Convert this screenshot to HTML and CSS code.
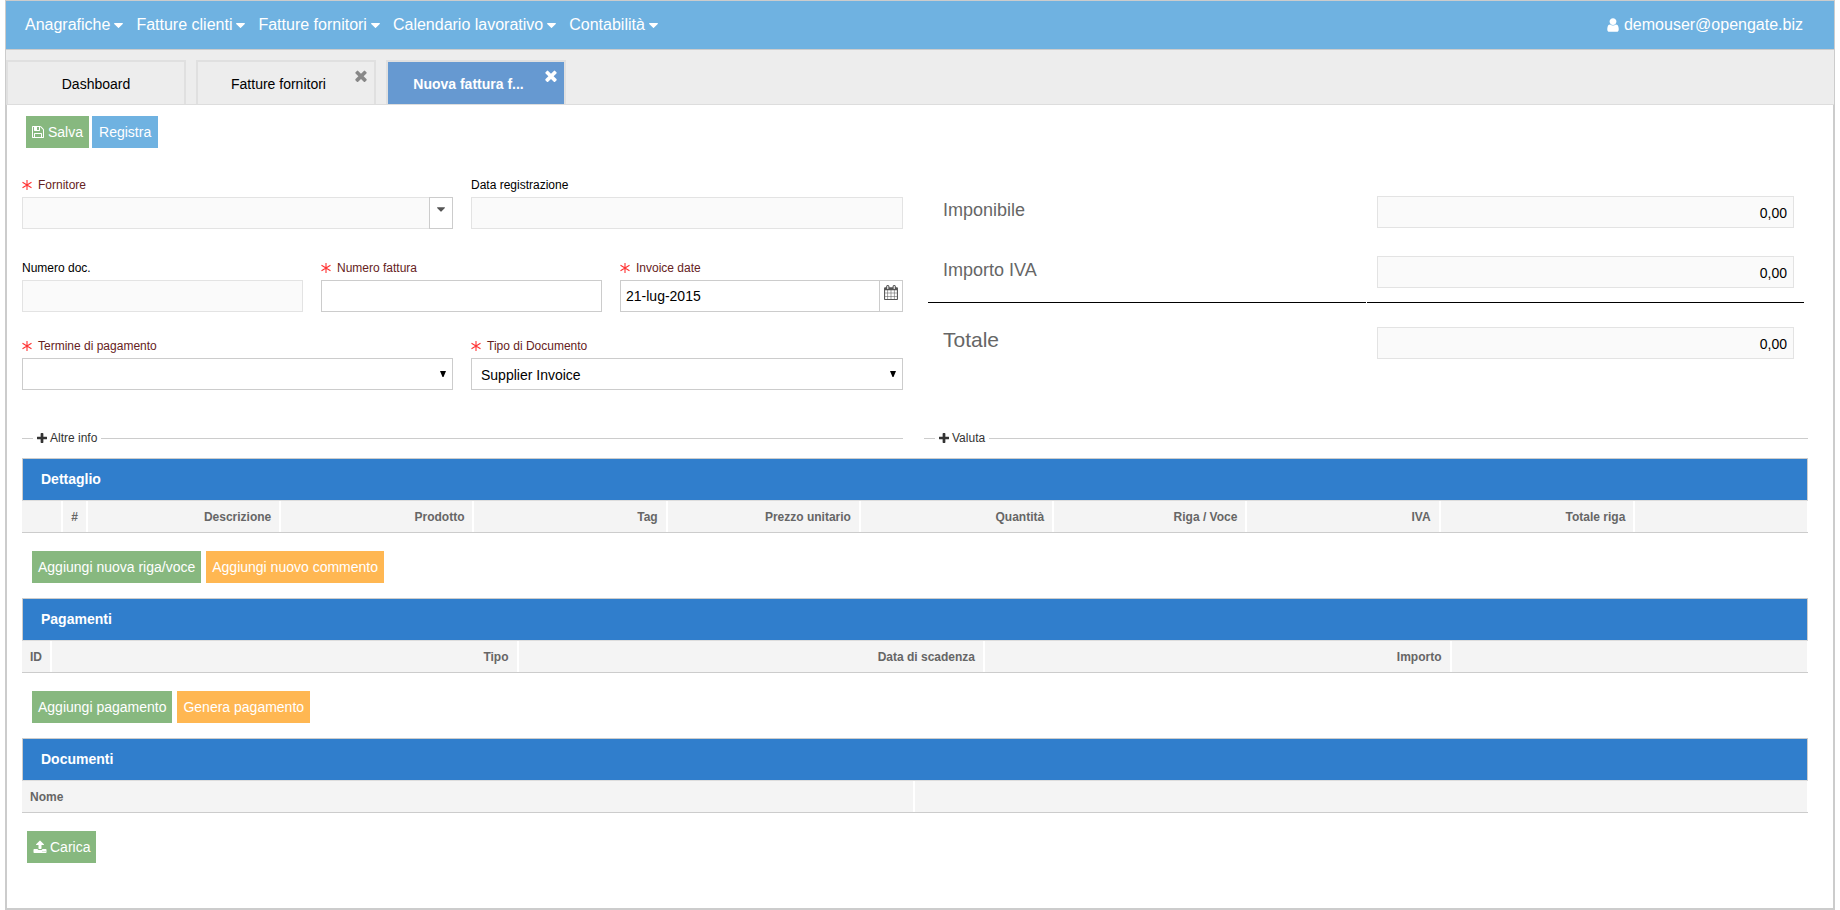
FILE: index.html
```html
<!DOCTYPE html>
<html lang="it">
<head>
<meta charset="utf-8">
<title>Nuova fattura fornitore</title>
<link rel="stylesheet" href="styles.css">
</head>
<body>
<svg class="sprite" aria-hidden="true">
  <symbol id="i-caret" viewBox="384 640 1024 576"><path d="M1408 704q0 26-19 45l-448 448q-19 19-45 19t-45-19l-448-448q-19-19-19-45t19-45 45-19h896q26 0 45 19t19 45z"/></symbol>
  <symbol id="i-user" viewBox="256 0 1280 1792"><path d="M1536 1399q0 109-62.5 187t-150.5 78h-854q-88 0-150.5-78t-62.5-187q0-85 8.5-160.5t31.5-152 58.5-131 94-89 134.5-34.5q131 128 313 128t313-128q76 0 134.5 34.5t94 89 58.5 131 31.5 152 8.5 160.5zm-256-887q0 159-112.5 271.5t-271.5 112.5-271.5-112.5-112.5-271.5 112.5-271.5 271.5-112.5 271.5 112.5 112.5 271.5z"/></symbol>
  <symbol id="i-times" viewBox="302 302 1188 1252"><path d="M1490 1322q0 40-28 68l-136 136q-28 28-68 28t-68-28l-294-294-294 294q-28 28-68 28t-68-28l-136-136q-28-28-28-68t28-68l294-294-294-294q-28-28-28-68t28-68l136-136q28-28 68-28t68 28l294 294 294-294q28-28 68-28t68 28l136 136q28 28 28 68t-28 68l-294 294 294 294q28 28 28 68z"/></symbol>
  <symbol id="i-plus" viewBox="192 128 1408 1408"><path d="M1600 736v192q0 40-28 68t-68 28h-416v416q0 40-28 68t-68 28h-192q-40 0-68-28t-28-68v-416h-416q-40 0-68-28t-28-68v-192q0-40 28-68t68-28h416v-416q0-40 28-68t68-28h192q40 0 68 28t28 68v416h416q40 0 68 28t28 68z"/></symbol>
  <symbol id="i-save" viewBox="128 0 1536 1792"><path d="M512 1536h768v-384h-768v384zm896 0h128v-896q0-14-10-38.5t-20-34.5l-281-281q-10-10-34-20t-39-10v416q0 40-28 68t-68 28h-576q-40 0-68-28t-28-68v-416h-128v1280h128v-416q0-40 28-68t68-28h832q40 0 68 28t28 68v416zm-384-928v-320q0-13-9.5-22.5t-22.5-9.5h-192q-13 0-22.5 9.5t-9.5 22.5v320q0 13 9.5 22.5t22.5 9.5h192q13 0 22.5-9.5t9.5-22.5zm640 32v928q0 40-28 68t-68 28h-1344q-40 0-68-28t-28-68v-1344q0-40 28-68t68-28h928q40 0 88 20t76 48l280 280q28 28 48 76t20 88z"/></symbol>
  <symbol id="i-upload" viewBox="0 0 1792 1792"><path d="M1344 1472q0-26-19-45t-45-19-45 19-19 45 19 45 45 19 45-19 19-45zm256 0q0-26-19-45t-45-19-45 19-19 45 19 45 45 19 45-19 19-45zm128-224v320q0 40-28 68t-68 28h-1472q-40 0-68-28t-28-68v-320q0-40 28-68t68-28h427q21 56 70.500 92t110.500 36h256q61 0 110.500-36t70.500-92h427q40 0 68 28t28 68zm-325-648q-17 40-59 40h-256v448q0 26-19 45t-45 19h-256q-26 0-45-19t-19-45v-448h-256q-42 0-59-40-17-39 14-69l448-448q18-19 45-19t45 19l448 448q31 30 14 69z"/></symbol>
  <symbol id="i-calendar" viewBox="64 0 1664 1792"><path d="M192 1664h288v-288h-288v288zm352 0h320v-288h-320v288zm-352-352h288v-320h-288v320zm352 0h320v-320h-320v320zm-352-384h288v-288h-288v288zm736 736h320v-288h-320v288zm-384-736h320v-288h-320v288zm768 736h288v-288h-288v288zm-384-352h320v-320h-320v320zm-352-864v-288q0-13-9.5-22.5t-22.5-9.5h-64q-13 0-22.500 9.500t-9.500 22.500v288q0 13 9.500 22.500t22.500 9.500h64q13 0 22.500-9.500t9.500-22.500zm736 864h288v-320h-288v320zm-384-384h320v-288h-320v288zm384 0h288v-288h-288v288zm32-480v-288q0-13-9.500-22.500t-22.500-9.500h-64q-13 0-22.500 9.500t-9.500 22.500v288q0 13 9.500 22.500t22.500 9.500h64q13 0 22.500-9.500t9.500-22.500zm384-64v1280q0 52-38 90t-90 38h-1408q-52 0-90-38t-38-90v-1280q0-52 38-90t90-38h128v-96q0-66 47-113t113-47h64q66 0 113 47t47 113v96h384v-96q0-66 47-113t113-47h64q66 0 113 47t47 113v96h128q52 0 90 38t38 90z"/></symbol>
  <symbol id="i-required" viewBox="0 0 10 10"><path d="M5 0v10M.5 2.200l9 5.600M9.500 2.200l-9 5.600" fill="none" stroke="currentColor" stroke-width="1.100"/></symbol>
  <symbol id="i-arrow" viewBox="0 0 6 6"><path d="M0 0h6L3.500 6h-1z"/></symbol>
</svg>

<div class="frame">
  <header class="topbar">
    <nav class="menu">
      <button type="button" class="menu-item">Anagrafiche<svg class="caret"><use href="#i-caret"/></svg></button>
      <button type="button" class="menu-item">Fatture clienti<svg class="caret"><use href="#i-caret"/></svg></button>
      <button type="button" class="menu-item">Fatture fornitori<svg class="caret"><use href="#i-caret"/></svg></button>
      <button type="button" class="menu-item">Calendario lavorativo<svg class="caret"><use href="#i-caret"/></svg></button>
      <button type="button" class="menu-item">Contabilità<svg class="caret"><use href="#i-caret"/></svg></button>
    </nav>
    <a class="user" href="#"><svg class="user-icon"><use href="#i-user"/></svg>demouser@opengate.biz</a>
  </header>

  <div class="tabs">
    <div class="tab"><button type="button" class="tab-label">Dashboard</button></div>
    <div class="tab closable"><button type="button" class="tab-label">Fatture fornitori</button><button type="button" class="tab-close" aria-label="Chiudi"><svg><use href="#i-times"/></svg></button></div>
    <div class="tab closable active"><button type="button" class="tab-label">Nuova fattura f...</button><button type="button" class="tab-close" aria-label="Chiudi"><svg><use href="#i-times"/></svg></button></div>
  </div>

  <main class="content">
    <div class="toolbar">
      <button type="button" class="btn green save"><svg class="save-icon"><use href="#i-save"/></svg>Salva</button>
      <button type="button" class="btn blue">Registra</button>
    </div>

    <form class="columns">
      <div class="fields">
        <div class="row two">
          <div class="field">
            <label class="required" for="fornitore"><svg><use href="#i-required"/></svg>Fornitore</label>
            <div class="combo"><input id="fornitore" type="text" readonly><button type="button" class="addon" aria-label="Apri elenco"><svg class="combo-caret"><use href="#i-caret"/></svg></button></div>
          </div>
          <div class="field">
            <label for="data-reg">Data registrazione</label>
            <input id="data-reg" type="text" readonly>
          </div>
        </div>
        <div class="row three">
          <div class="field">
            <label for="num-doc">Numero doc.</label>
            <input id="num-doc" type="text" readonly>
          </div>
          <div class="field">
            <label class="required" for="num-fatt"><svg><use href="#i-required"/></svg>Numero fattura</label>
            <input id="num-fatt" type="text">
          </div>
          <div class="field">
            <label class="required" for="inv-date"><svg><use href="#i-required"/></svg>Invoice date</label>
            <div class="combo"><input id="inv-date" type="text" value="21-lug-2015"><button type="button" class="addon" aria-label="Calendario"><svg class="cal-icon"><use href="#i-calendar"/></svg></button></div>
          </div>
        </div>
        <div class="row two">
          <div class="field">
            <label class="required" for="termine"><svg><use href="#i-required"/></svg>Termine di pagamento</label>
            <div class="select"><select id="termine"><option></option></select><svg><use href="#i-arrow"/></svg></div>
          </div>
          <div class="field">
            <label class="required" for="tipo"><svg><use href="#i-required"/></svg>Tipo di Documento</label>
            <div class="select"><select id="tipo"><option>Supplier Invoice</option></select><svg><use href="#i-arrow"/></svg></div>
          </div>
        </div>
      </div>
      <div class="totals">
        <div class="total"><label for="imponibile">Imponibile</label><div class="amount"><input id="imponibile" type="text" value="0,00" readonly></div></div>
        <div class="total ruled"><label for="iva">Importo IVA</label><div class="amount"><input id="iva" type="text" value="0,00" readonly></div></div>
        <div class="total grand"><label for="totale">Totale</label><div class="amount"><input id="totale" type="text" value="0,00" readonly></div></div>
      </div>
    </form>

    <div class="columns folds">
      <fieldset class="fold"><legend><button type="button"><svg><use href="#i-plus"/></svg>Altre info</button></legend></fieldset>
      <fieldset class="fold"><legend><button type="button"><svg><use href="#i-plus"/></svg>Valuta</button></legend></fieldset>
    </div>

    <section class="section">
      <h2>Dettaglio</h2>
      <table class="detail">
        <colgroup><col class="c-handle"><col class="c-num"><col span="7" class="c-data"><col class="c-total"><col></colgroup>
        <thead><tr><th></th><th>#</th><th>Descrizione</th><th>Prodotto</th><th>Tag</th><th>Prezzo unitario</th><th>Quantità</th><th>Riga / Voce</th><th>IVA</th><th>Totale riga</th><th></th></tr></thead>
      </table>
      <div class="actions">
        <button type="button" class="btn green">Aggiungi nuova riga/voce</button>
        <button type="button" class="btn orange">Aggiungi nuovo commento</button>
      </div>
    </section>

    <section class="section">
      <h2>Pagamenti</h2>
      <table>
        <colgroup><col class="c-id"><col span="3" class="c-pay"><col></colgroup>
        <thead><tr><th>ID</th><th>Tipo</th><th>Data di scadenza</th><th>Importo</th><th></th></tr></thead>
      </table>
      <div class="actions">
        <button type="button" class="btn green">Aggiungi pagamento</button>
        <button type="button" class="btn orange">Genera pagamento</button>
      </div>
    </section>

    <section class="section">
      <h2>Documenti</h2>
      <table>
        <colgroup><col class="c-half"><col></colgroup>
        <thead><tr><th class="left">Nome</th><th></th></tr></thead>
      </table>
      <div class="actions upload">
        <button type="button" class="btn green"><svg class="upload-icon"><use href="#i-upload"/></svg>Carica</button>
      </div>
    </section>
  </main>
</div>
</body>
</html>
```
FILE: styles.css
```css
* { box-sizing: border-box; }

body {
  margin: 0;
  padding: 0 5px;
  background: #fff;
  color: #000;
  font-family: "Liberation Sans", Arial, sans-serif;
  font-size: 14px;
}

button, input, select { font: inherit; color: inherit; margin: 0; border-radius: 0; }
button { border: 0; padding: 0; background: none; cursor: pointer; }
svg { fill: currentColor; flex: none; }
.sprite { position: absolute; width: 0; height: 0; }

.frame { border: 1px solid #ccc; border-bottom-width: 2px; }

/* Top bar */
.topbar {
  display: flex;
  justify-content: space-between;
  align-items: center;
  height: 49px;
  padding: 0 31px 0 19px;
  background: #6fb2e1;
  border-bottom: 1px solid #ccc;
  color: #fff;
  font-size: 16px;
}
.menu { display: flex; gap: 13px; }
.menu-item, .user { display: flex; align-items: center; gap: 4px; }
.user { color: #fff; text-decoration: none; gap: 5px; }
.caret { width: 9px; height: 5px; }
.user-icon { width: 12px; height: 16px; }

/* Tabs */
.tabs {
  display: flex;
  gap: 10px;
  height: 55px;
  padding-top: 10px;
  background: #ededed;
  border-bottom: 1px solid #ddd;
}
.tab { position: relative; width: 180px; border: 2px solid #e0e0e0; border-bottom: 0; }
.tab-label { width: 100%; height: 100%; padding-top: 2px; }
.closable .tab-label { padding-right: 15px; }
.tab-close { position: absolute; top: 8px; right: 7px; width: 12px; height: 12px; color: #888; }
.tab-close svg { display: block; width: 12px; height: 12px; }
.active { background: #6699d1; color: #fff; font-weight: bold; }
.active .tab-close { color: #fff; }

/* Content */
.content {
  padding: 11px 25px 45px 15px;
  border: solid #ccc;
  border-width: 0 1px;
}
.toolbar { display: flex; gap: 3px; padding-left: 4px; }
.btn { display: flex; align-items: center; height: 32px; padding: 0 6px; color: #fff; }
.green { background: #87b87f; }
.blue { background: #6fb2e1; padding: 0 7px; }
.orange { background: #ffb752; }
.save { gap: 4px; }
.save-icon { width: 12px; height: 14px; }
.upload-icon { width: 14px; height: 14px; margin-right: 3px; }

.columns { display: grid; grid-template-columns: 881fr 884fr; gap: 21px; }
.fields { padding-top: 29px; }
.row { display: grid; gap: 18px; margin-bottom: 31px; }
.row + .row { margin-bottom: 26px; }
.row + .row + .row { margin-bottom: 0; }
.two { grid-template-columns: 431fr 432fr; }
.three { grid-template-columns: 281fr 281fr 283fr; }
.field { min-width: 0; }
.field label { display: flex; align-items: center; gap: 6px; height: 16px; margin-bottom: 4px; font-size: 12px; }
.field label svg { width: 10px; height: 10px; color: #f33; }
.field .required { color: #622; }

input, select {
  display: block;
  width: 100%;
  min-width: 0;
  height: 32px;
  padding: 0 5px;
  border: 1px solid #ccc;
  background: #fff;
  outline: 0;
}
input[readonly] { background: #fafafa; border-color: #e3e3e3; }
.combo { display: flex; }
.combo input { border-right: 0; }
.addon { display: flex; flex: none; justify-content: center; width: 24px; height: 32px; border: 1px solid #ccc; color: #555; }
.combo-caret { width: 8px; height: 5px; margin-top: 9px; }
.cal-icon { width: 14px; height: 15px; margin-top: 4px; }
.select { position: relative; }
.select select { appearance: none; padding: 2px 9px 0; }
.select svg { position: absolute; top: 13px; right: 7px; width: 6px; height: 6px; pointer-events: none; }

/* Totals */
.totals { padding: 38px 4px 0; }
.total { display: grid; grid-template-columns: 1fr 1fr; gap: 1px; color: #666; font-size: 18px; }
.total label { display: block; padding: 14px 15px 0; }
.amount { padding: 10px 10px 18px; color: #000; font-size: 14px; }
.total input { text-align: right; padding: 2px 6px 0; }
.ruled label, .ruled .amount { border-bottom: 1px solid #000; }
.ruled .amount { padding-bottom: 14px; }
.grand { padding-top: 14px; }
.grand label { font-size: 21px; padding-top: 11px; }

/* Collapsed groups */
.folds { padding-top: 41px; margin-bottom: 13px; }
.fold { margin: 0; padding: 0 11px; border: 0 solid #ccc; border-top-width: 1px; min-width: 0; height: 14px; }
.fold legend { padding: 0 4px; color: #333; font-size: 12px; line-height: 14px; }
.fold button { display: flex; align-items: center; gap: 3px; }
.fold svg { width: 10px; height: 10px; }

/* Sections */
.section h2 {
  margin: 0;
  padding: 0 18px;
  height: 43px;
  line-height: 41px;
  border: 1px solid #ccc;
  border-bottom-color: #ddd;
  background: #307ecc;
  color: #fff;
  font-size: 14px;
}
.section table { width: 100%; table-layout: fixed; border-collapse: separate; border-spacing: 0; border-bottom: 1px solid #ccc; }
.section th {
  height: 31px;
  padding: 0 8px;
  border-right: 2px solid #fff;
  background: #f4f4f4;
  color: #666;
  font-size: 12px;
  text-align: right;
  white-space: nowrap;
}
.section th:last-child { border-right-width: 1px; }
.section .left { text-align: left; }
.c-handle { width: 41px; }
.c-num { width: 25px; }
.c-data { width: 10.82%; }
.c-total { width: 10.9%; }
.c-id { width: 30px; }
.c-pay { width: 26.12%; }
.c-half { width: 50%; }
.actions { display: flex; gap: 5px; padding: 18px 10px 15px; }
.upload { padding: 18px 5px 0; }
```
